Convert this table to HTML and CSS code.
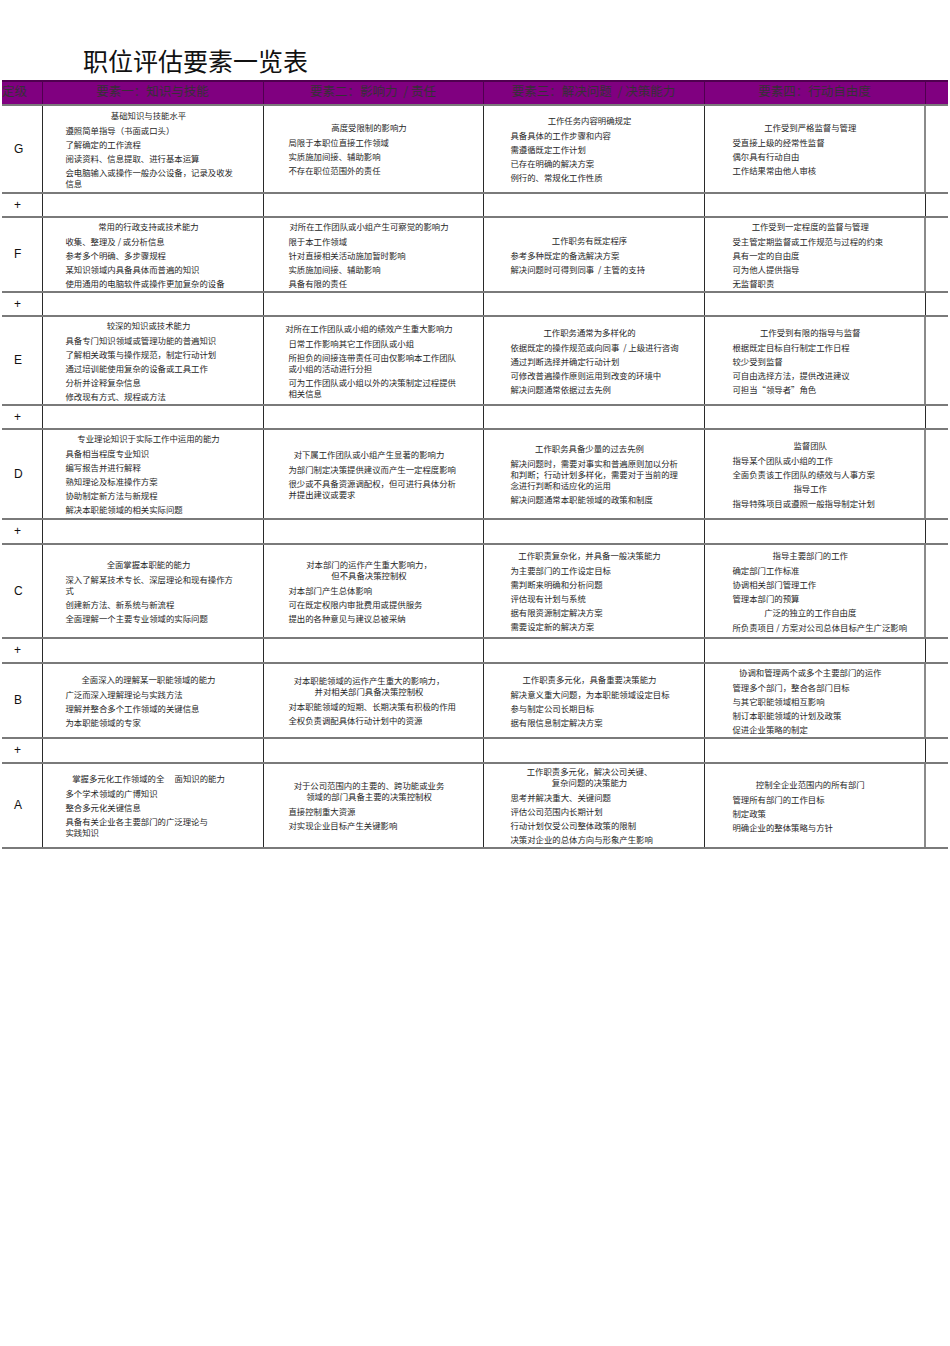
FILE: index.html
```html
<!DOCTYPE html>
<html lang="zh-CN">
<head>
<meta charset="utf-8">
<title>职位评估要素一览表</title>
<link rel="stylesheet" href="styles.css">
</head>
<body>
<div class="page">
  <h1 class="title">职位评估要素一览表</h1>
  <table class="grid">
    <colgroup>
      <col class="w-grade"><col class="w-f1"><col class="w-f2"><col class="w-f3"><col class="w-f4"><col class="w-end">
    </colgroup>
    <tr class="hd">
      <th class="hgrade">定级</th>
      <th>要素一：知识与技能</th>
      <th>要素二：影响力 &nbsp;/ 责任</th>
      <th>要素三：解决问题 &nbsp;/ 决策能力</th>
      <th>要素四：行动自由度</th>
      <th></th>
    </tr>
    <tr class="rg">
      <td class="grade">G</td>
      <td class="c1"><p class="h">基础知识与技能水平</p><p class="i">遵照简单指导（书面或口头）</p><p class="i">了解确定的工作流程</p><p class="i">阅读资料、信息提取、进行基本运算</p><p class="i">会电脑输入或操作一般办公设备，记录及收发<br>信息</p></td>
      <td class="c2"><p class="h">高度受限制的影响力</p><p class="i">局限于本职位直接工作领域</p><p class="i">实质施加间接、辅助影响</p><p class="i">不存在职位范围外的责任</p></td>
      <td class="c3"><p class="h">工作任务内容明确规定</p><p class="i">具备具体的工作步骤和内容</p><p class="i">需遵循既定工作计划</p><p class="i">已存在明确的解决方案</p><p class="i">例行的、常规化工作性质</p></td>
      <td class="c4"><p class="h">工作受到严格监督与管理</p><p class="i">受直接上级的经常性监督</p><p class="i">偶尔具有行动自由</p><p class="i">工作结果常由他人审核</p></td>
      <td class="end"></td>
    </tr>
    <tr class="plus"><td class="grade">+</td><td></td><td></td><td></td><td></td><td class="end"></td></tr>
    <tr class="rf">
      <td class="grade">F</td>
      <td class="c1"><p class="h">常用的行政支持或技术能力</p><p class="i">收集、整理及 / 或分析信息</p><p class="i">参考多个明确、多步骤规程</p><p class="i">某知识领域内具备具体而普遍的知识</p><p class="i">使用通用的电脑软件或操作更加复杂的设备</p></td>
      <td class="c2"><p class="h">对所在工作团队或小组产生可察觉的影响力</p><p class="i">限于本工作领域</p><p class="i">针对直接相关活动施加暂时影响</p><p class="i">实质施加间接、辅助影响</p><p class="i">具备有限的责任</p></td>
      <td class="c3"><p class="h">工作职务有既定程序</p><p class="i">参考多种既定的备选解决方案</p><p class="i">解决问题时可得到同事 &nbsp;/ 主管的支持</p></td>
      <td class="c4"><p class="h">工作受到一定程度的监督与管理</p><p class="i">受主管定期监督或工作规范与过程的约束</p><p class="i">具有一定的自由度</p><p class="i">可为他人提供指导</p><p class="i">无监督职责</p></td>
      <td class="end"></td>
    </tr>
    <tr class="plus"><td class="grade">+</td><td></td><td></td><td></td><td></td><td class="end"></td></tr>
    <tr class="re">
      <td class="grade">E</td>
      <td class="c1"><p class="h">较深的知识或技术能力</p><p class="i">具备专门知识领域或管理功能的普遍知识</p><p class="i">了解相关政策与操作规范，制定行动计划</p><p class="i">通过培训能使用复杂的设备或工具工作</p><p class="i">分析并诠释复杂信息</p><p class="i">修改现有方式、规程或方法</p></td>
      <td class="c2"><p class="h">对所在工作团队或小组的绩效产生重大影响力</p><p class="i">日常工作影响其它工作团队或小组</p><p class="i">所担负的间接连带责任可由仅影响本工作团队<br>或小组的活动进行分担</p><p class="i">可为工作团队或小组以外的决策制定过程提供<br>相关信息</p></td>
      <td class="c3"><p class="h">工作职务通常为多样化的</p><p class="i">依据既定的操作规范或向同事 &nbsp;/ 上级进行咨询</p><p class="i">通过判断选择并确定行动计划</p><p class="i">可修改普遍操作原则运用到改变的环境中</p><p class="i">解决问题通常依据过去先例</p></td>
      <td class="c4"><p class="h">工作受到有限的指导与监督</p><p class="i">根据既定目标自行制定工作日程</p><p class="i">较少受到监督</p><p class="i">可自由选择方法，提供改进建议</p><p class="i">可担当“领导者”角色</p></td>
      <td class="end"></td>
    </tr>
    <tr class="plus"><td class="grade">+</td><td></td><td></td><td></td><td></td><td class="end"></td></tr>
    <tr class="rd">
      <td class="grade">D</td>
      <td class="c1"><p class="h">专业理论知识于实际工作中运用的能力</p><p class="i">具备相当程度专业知识</p><p class="i">编写报告并进行解释</p><p class="i">熟知理论及标准操作方案</p><p class="i">协助制定新方法与新规程</p><p class="i">解决本职能领域的相关实际问题</p></td>
      <td class="c2"><p class="h">对下属工作团队或小组产生显著的影响力</p><p class="i">为部门制定决策提供建议而产生一定程度影响</p><p class="i">很少或不具备资源调配权，但可进行具体分析<br>并提出建议或要求</p></td>
      <td class="c3"><p class="h">工作职务具备少量的过去先例</p><p class="i">解决问题时，需要对事实和普遍原则加以分析<br>和判断；行动计划多样化，需要对于当前的理<br>念进行判断和适应化的运用</p><p class="i">解决问题通常本职能领域的政策和制度</p></td>
      <td class="c4"><p class="h">监督团队</p><p class="i">指导某个团队或小组的工作</p><p class="i">全面负责该工作团队的绩效与人事方案</p><p class="h">指导工作</p><p class="i">指导特殊项目或遵照一般指导制定计划</p></td>
      <td class="end"></td>
    </tr>
    <tr class="plus plus2"><td class="grade">+</td><td></td><td></td><td></td><td></td><td class="end"></td></tr>
    <tr class="rc">
      <td class="grade">C</td>
      <td class="c1"><p class="h">全面掌握本职能的能力</p><p class="i">深入了解某技术专长、深层理论和现有操作方<br>式</p><p class="i">创建新方法、新系统与新流程</p><p class="i">全面理解一个主要专业领域的实际问题</p></td>
      <td class="c2"><p class="h">对本部门的运作产生重大影响力，<br>但不具备决策控制权</p><p class="i">对本部门产生总体影响</p><p class="i">可在既定权限内审批费用或提供服务</p><p class="i">提出的各种意见与建议总被采纳</p></td>
      <td class="c3"><p class="h">工作职责复杂化，并具备一般决策能力</p><p class="i">为主要部门的工作设定目标</p><p class="i">需判断来明确和分析问题</p><p class="i">评估现有计划与系统</p><p class="i">据有限资源制定解决方案</p><p class="i">需要设定新的解决方案</p></td>
      <td class="c4"><p class="h">指导主要部门的工作</p><p class="i">确定部门工作标准</p><p class="i">协调相关部门管理工作</p><p class="i">管理本部门的预算</p><p class="h">广泛的独立的工作自由度</p><p class="i">所负责项目 / 方案对公司总体目标产生广泛影响</p></td>
      <td class="end"></td>
    </tr>
    <tr class="plus plus2"><td class="grade">+</td><td></td><td></td><td></td><td></td><td class="end"></td></tr>
    <tr class="rb">
      <td class="grade">B</td>
      <td class="c1"><p class="h">全面深入的理解某一职能领域的能力</p><p class="i">广泛而深入理解理论与实践方法</p><p class="i">理解并整合多个工作领域的关键信息</p><p class="i">为本职能领域的专家</p></td>
      <td class="c2"><p class="h">对本职能领域的运作产生重大的影响力，<br>并对相关部门具备决策控制权</p><p class="i">对本职能领域的短期、长期决策有积极的作用</p><p class="i">全权负责调配具体行动计划中的资源</p></td>
      <td class="c3"><p class="h">工作职责多元化，具备重要决策能力</p><p class="i">解决意义重大问题，为本职能领域设定目标</p><p class="i">参与制定公司长期目标</p><p class="i">据有限信息制定解决方案</p></td>
      <td class="c4"><p class="h">协调和管理两个或多个主要部门的运作</p><p class="i">管理多个部门，整合各部门目标</p><p class="i">与其它职能领域相互影响</p><p class="i">制订本职能领域的计划及政策</p><p class="i">促进企业策略的制定</p></td>
      <td class="end"></td>
    </tr>
    <tr class="plus plus2"><td class="grade">+</td><td></td><td></td><td></td><td></td><td class="end"></td></tr>
    <tr class="ra">
      <td class="grade">A</td>
      <td class="c1"><p class="h">掌握多元化工作领域的全　 面知识的能力</p><p class="i">多个学术领域的广博知识</p><p class="i">整合多元化关键信息</p><p class="i">具备有关企业各主要部门的广泛理论与<br>实践知识</p></td>
      <td class="c2"><p class="h">对于公司范围内的主要的、跨功能或业务<br>领域的部门具备主要的决策控制权</p><p class="i">直接控制重大资源</p><p class="i">对实现企业目标产生关键影响</p></td>
      <td class="c3"><p class="h">工作职责多元化，解决公司关键、<br>复杂问题的决策能力</p><p class="i">思考并解决重大、关键问题</p><p class="i">评估公司范围内长期计划</p><p class="i">行动计划仅受公司整体政策的限制</p><p class="i">决策对企业的总体方向与形象产生影响</p></td>
      <td class="c4"><p class="h">控制全企业范围内的所有部门</p><p class="i">管理所有部门的工作目标</p><p class="i">制定政策</p><p class="i">明确企业的整体策略与方针</p></td>
      <td class="end"></td>
    </tr>
  </table>
</div>
</body>
</html>
```
FILE: styles.css
```css
* { box-sizing: border-box; }
html, body { margin: 0; padding: 0; background: #ffffff; }
body {
  font-family: "Noto Sans CJK SC", "Liberation Sans", sans-serif;
  color: #262626;
}
.page { padding: 45px 2px 0; }
.title {
  margin: 0 0 5px 81px;
  font-size: 25px;
  line-height: 30px;
  font-weight: 400;
  color: #111111;
}
.grid {
  border-collapse: collapse;
  table-layout: fixed;
  width: 946px;
}
.w-grade { width: 40px; }
.w-f1 { width: 221px; }
.w-f2 { width: 220px; }
.w-f3 { width: 221px; }
.w-f4 { width: 221px; }
.w-end { width: 23px; }

.hd { height: 24px; }
.hd th {
  background: #800080;
  color: #363036;
  font-weight: 400;
  font-size: 12.5px;
  line-height: 14px;
  padding: 0 0 4px;
  text-align: center;
  vertical-align: middle;
  white-space: nowrap;
  border-top: 2px solid #4f004f;
  border-bottom: 2px solid #7a7a7a;
  border-left: 1px solid #4f004f;
  border-right: 1px solid #4f004f;
}
.hd th.hgrade { text-align: left; padding-left: 0; border-left: none; }
.hd th:last-child { border-right: none; }

.grid td {
  padding: 0 26px 0 18px;
  vertical-align: middle;
  border-top: 2px solid #7a7a7a;
  border-bottom: 2px solid #7a7a7a;
  border-left: 1px solid #2a2a2a;
  border-right: 1px solid #2a2a2a;
  font-size: 8.4px;
  line-height: 11px;
  white-space: nowrap;
}
.grid td.grade {
  border-left: none;
  padding: 0 0 0 12px;
  font-family: "Liberation Sans", Arial, sans-serif;
  font-size: 12px;
  color: #111111;
}
.grid td.end { border-right: none; padding: 0; }
.grid td.c4 { border-right: 2px solid #8a8a8a; }

.rg { height: 88px; }
.rf { height: 75px; }
.re { height: 89px; }
.rd { height: 90px; }
.rc { height: 94px; }
.rb { height: 75px; }
.ra { height: 85px; }
.plus { height: 24px; }
.plus2 { height: 25px; }

.h {
  margin: 3px 0 4px;
  text-align: center;
}
.i { margin: 3px 0 0; }
td > p:first-child { margin-top: 0; }
.c1 .i { padding-left: 5px; }
.c2 .i { padding-left: 7px; }
.c3 .i { padding-left: 9px; }
.c4 .i { padding-left: 10px; }
```
